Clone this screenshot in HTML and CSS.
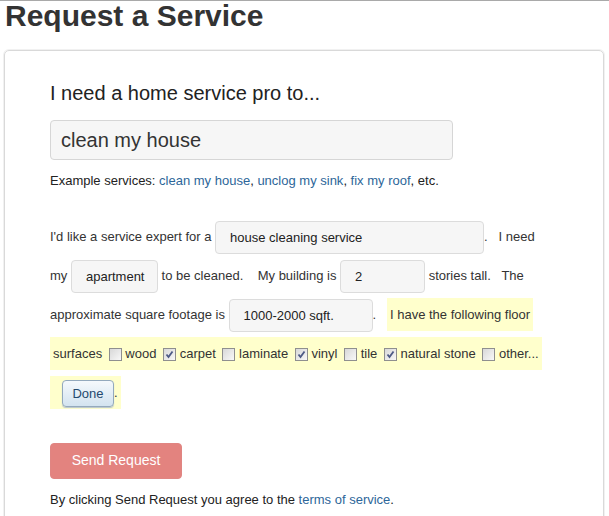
FILE: index.html
```html
<!DOCTYPE html>
<html lang="en">
<head>
  <meta charset="UTF-8">
  <meta name="viewport" content="width=device-width, initial-scale=1.0">
  <title>Request a Service</title>
  <link rel="stylesheet" href="styles.css">
</head>
<body>
  <h1 class="page-title">Request a Service</h1>
  <div class="card">
    <h2 class="lead">I need a home service pro to...</h2>
    <input type="text" class="search" value="clean my house">
    <p class="examples">Example services: <a href="#">clean my house</a>, <a href="#">unclog my sink</a>, <a href="#">fix my roof</a>, etc.</p>

    <p class="story">I'd like a service expert for a <span class="field field-service">house cleaning service</span>.&nbsp;&nbsp; I need my <span class="field field-home">apartment</span> to be cleaned.&nbsp;&nbsp;&nbsp; My building is <span class="field field-stories">2</span> stories tall.&nbsp;&nbsp; The approximate square footage is <span class="field field-size">1000-2000 sqft.</span>.&nbsp;&nbsp; <span class="hl">I have the following floor surfaces <label><input type="checkbox"> wood</label> <label><input type="checkbox" checked> carpet</label> <label><input type="checkbox"> laminate</label> <label><input type="checkbox" checked> vinyl</label> <label><input type="checkbox"> tile</label> <label><input type="checkbox" checked> natural stone</label> <label><input type="checkbox"> other...</label> <button type="button" class="done">Done</button>.</span></p>

    <button type="submit" class="send">Send Request</button>
    <p class="terms">By clicking Send Request you agree to the <a href="#">terms of service</a>.</p>
  </div>
</body>
</html>
```

FILE: styles.css
```css
body {
  margin: 0;
  border-top: 1px solid #a9a9a9;
  font-family: "Liberation Sans", Arial, sans-serif;
  color: #333;
  background-color: #fff;
}
a {
  color: #2d6699;
  text-decoration: none;
}
.page-title {
  margin: 0 0 0 5px;
  font-size: 30px;
  line-height: 30px;
  font-weight: bold;
  color: #333;
}
.card {
  box-sizing: border-box;
  width: 600px;
  margin: 19px 0 0 4px;
  padding: 30px 49px 20px 45px;
  border: 1px solid #d9d9d9;
  border-radius: 5px;
  box-shadow: 0 0 0 1px #f1f1f1;
}
.lead {
  margin: 0;
  font-size: 20px;
  line-height: 24px;
  font-weight: normal;
  color: #222;
}
.search {
  display: block;
  box-sizing: border-box;
  width: 403px;
  height: 40px;
  margin-top: 15px;
  padding: 0 10px;
  border: 1px solid #d6d6d6;
  border-radius: 4px;
  background-color: #f6f6f6;
  font-family: inherit;
  font-size: 20px;
  color: #333;
}
.examples {
  margin: 12px 0 0;
  font-size: 13px;
  line-height: 18px;
  color: #222;
}
.story {
  margin: 27px 0 0;
  font-size: 13px;
  line-height: 39px;
  color: #333;
}
.field {
  display: inline-block;
  box-sizing: border-box;
  height: 33px;
  line-height: 31px;
  padding: 0 14px;
  border: 1px solid #dcdcdc;
  border-radius: 4px;
  background-color: #f6f6f6;
  vertical-align: middle;
  color: #222;
}
.field-service { width: 269px; }
.field-home { width: 87px; }
.field-stories { width: 85px; }
.field-size { width: 144px; }
.hl {
  padding: 9px 3px;
  background-color: #ffffcc;
  -webkit-box-decoration-break: clone;
  box-decoration-break: clone;
}
.hl input[type="checkbox"] {
  -webkit-appearance: none;
  appearance: none;
  width: 13px;
  height: 13px;
  margin: 0 0 0 3px;
  border: 1px solid #8f8f8f;
  background: linear-gradient(135deg, #d8d8d8, #f8f8f8);
  vertical-align: middle;
}
.hl input[type="checkbox"]:checked {
  background: url("data:image/svg+xml;utf8,<svg xmlns='http://www.w3.org/2000/svg' width='11' height='11'><path d='M2.5 5.5 L4.5 8 L8.5 2.5' fill='none' stroke='%234d5a85' stroke-width='1.8'/></svg>") center no-repeat, linear-gradient(135deg, #d8d8d8, #f8f8f8);
}
.done {
  box-sizing: border-box;
  width: 52px;
  height: 27px;
  margin-left: 9px;
  padding: 0;
  border: 1px solid #93a9bd;
  border-radius: 4px;
  background: linear-gradient(#f5f9fc, #d3e3f0);
  box-shadow: 0 1px 1px #b9c5cf;
  font-family: inherit;
  font-size: 13px;
  color: #24496e;
  vertical-align: middle;
}
.send {
  display: block;
  box-sizing: border-box;
  width: 132px;
  height: 36px;
  margin-top: 31px;
  padding: 0 0 2px;
  border: 1px solid #e08582;
  border-radius: 4px;
  background-color: #e3837f;
  font-family: inherit;
  font-size: 14px;
  color: #fff;
}
.terms {
  margin: 12px 0 0;
  font-size: 13px;
  line-height: 18px;
  color: #222;
}
```
